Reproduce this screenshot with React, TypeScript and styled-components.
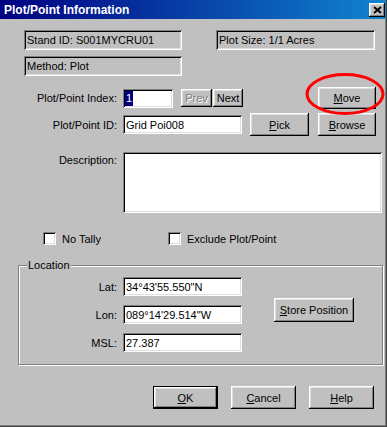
import styled, { createGlobalStyle, css } from "styled-components";

const GlobalStyle = createGlobalStyle`
  html, body {
    margin: 0;
    padding: 0;
    background: #c0c0c0;
  }
  body {
    font-family: "Liberation Sans", Arial, sans-serif;
    font-size: 11px;
    color: #000;
  }
  * {
    box-sizing: border-box;
  }
`;

const raised = css`
  background: #c0c0c0;
  box-shadow: inset -1px -1px #000, inset 1px 1px #fff, inset -2px -2px #808080, inset 2px 2px #dfdfdf;
`;

const sunken = css`
  box-shadow: inset 1px 1px #808080, inset -1px -1px #fff, inset 2px 2px #000, inset -2px -2px #dfdfdf;
`;

const Window = styled.div`
  position: relative;
  width: 387px;
  height: 427px;
  background: #c0c0c0;
  border-right: 1px solid #404040;
  border-bottom: 1px solid #404040;
  box-shadow: inset -1px -1px #808080;
  display: flex;
  flex-direction: column;
`;

const TitleBar = styled.div`
  height: 19px;
  display: flex;
  align-items: center;
  justify-content: space-between;
  padding: 0 1px 0 4px;
  background: linear-gradient(90deg, #000080, #1084d0);
  color: #fff;
  font-weight: bold;
  font-size: 12px;
`;

const CloseButton = styled.div`
  ${raised};
  width: 16px;
  height: 14px;
  display: flex;
  align-items: center;
  justify-content: center;
`;

const InfoRow = styled.div<{ $top: number }>`
  display: flex;
  gap: 34px;
  padding-left: 24px;
  margin-top: ${(p) => p.$top}px;
`;

const StaticBox = styled.div<{ $w: number }>`
  ${sunken};
  width: ${(p) => p.$w}px;
  height: 20px;
  padding-left: 3px;
  display: flex;
  align-items: center;
  white-space: nowrap;
`;

const FormRow = styled.div<{ $top: number; $h: number; $align?: string }>`
  display: flex;
  align-items: ${(p) => p.$align ?? "center"};
  height: ${(p) => p.$h}px;
  margin-top: ${(p) => p.$top}px;
`;

const Label = styled.div<{ $w: number; $pad?: number }>`
  width: ${(p) => p.$w}px;
  margin-right: 6px;
  padding-top: ${(p) => p.$pad ?? 0}px;
  text-align: right;
  white-space: nowrap;
`;

const Field = styled.div<{ $w: number; $h?: number }>`
  ${sunken};
  background: #fff;
  width: ${(p) => p.$w}px;
  height: ${(p) => p.$h ?? 19}px;
  padding: 0 3px;
  display: flex;
  align-items: center;
  white-space: nowrap;
`;

const Selected = styled.span`
  background: #000080;
  color: #fff;
  line-height: 15px;
  padding: 0 1px;
  margin-left: -1px;
`;

const Button = styled.div<{ $w: number; $h: number; $left?: number; $top?: number; $disabled?: boolean }>`
  ${raised};
  width: ${(p) => p.$w}px;
  height: ${(p) => p.$h}px;
  margin-left: ${(p) => p.$left ?? 0}px;
  margin-top: ${(p) => p.$top ?? 0}px;
  display: flex;
  align-items: center;
  justify-content: center;
  white-space: nowrap;
  flex-shrink: 0;
  color: ${(p) => (p.$disabled ? "#808080" : "#000")};
  text-shadow: ${(p) => (p.$disabled ? "1px 1px #fff" : "none")};
`;

const DefaultButton = styled(Button)`
  border: 1px solid #000;
`;

const CheckRow = styled.div`
  display: flex;
  align-items: center;
  height: 13px;
  margin-top: 19px;
  padding-left: 43px;
`;

const CheckItem = styled.div<{ $w?: number }>`
  display: flex;
  align-items: center;
  gap: 6px;
  width: ${(p) => (p.$w ? `${p.$w}px` : "auto")};
`;

const CheckBox = styled.div`
  ${sunken};
  background: #fff;
  width: 13px;
  height: 13px;
`;

const Group = styled.div`
  position: relative;
  margin: 20px 0 0 18px;
  width: 365px;
  height: 100px;
  border: 1px solid #808080;
  box-shadow: inset 1px 1px #fff, 1px 1px #fff;
  display: flex;
  align-items: flex-start;
  padding-top: 11px;
`;

const Legend = styled.div`
  position: absolute;
  top: -7px;
  left: 8px;
  padding: 0 1px;
  line-height: 13px;
  background: #c0c0c0;
`;

const FieldStack = styled.div`
  display: flex;
  flex-direction: column;
  gap: 9px;
`;

const StackRow = styled.div`
  display: flex;
  align-items: center;
`;

const ButtonBar = styled.div`
  display: flex;
  justify-content: flex-end;
  gap: 13px;
  margin-top: 21px;
  padding-right: 12px;
`;

const Annotation = styled.svg`
  position: absolute;
  left: 304px;
  top: 72px;
  pointer-events: none;
`;

const locationFields = [
  { label: "Lat:", value: "34°43'55.550\"N" },
  { label: "Lon:", value: "089°14'29.514\"W" },
  { label: "MSL:", value: "27.387" },
];

export default function App() {
  return (
    <>
      <GlobalStyle />
      <Window>
        <TitleBar>
          Plot/Point Information
          <CloseButton>
            <svg width="9" height="8" viewBox="0 0 9 8">
              <path d="M1 1l7 6M8 1L1 7" stroke="#000" strokeWidth="2" />
            </svg>
          </CloseButton>
        </TitleBar>

        <InfoRow $top={11}>
          <StaticBox $w={158}>Stand ID: S001MYCRU01</StaticBox>
          <StaticBox $w={159}>Plot Size: 1/1 Acres</StaticBox>
        </InfoRow>
        <InfoRow $top={6}>
          <StaticBox $w={158}>Method: Plot</StaticBox>
        </InfoRow>

        <FormRow $top={11} $h={22}>
          <Label $w={117}>Plot/Point Index:</Label>
          <Field $w={50}>
            <Selected>1</Selected>
          </Field>
          <Button $w={31} $h={18} $left={8} $disabled>Prev</Button>
          <Button $w={30} $h={18} $left={1}>Next</Button>
          <Button $w={58} $h={22} $left={75}><u>M</u>ove</Button>
        </FormRow>

        <FormRow $top={4} $h={23}>
          <Label $w={117}>Plot/Point ID:</Label>
          <Field $w={119}>Grid Poi008</Field>
          <Button $w={59} $h={23} $left={8}><u>P</u>ick</Button>
          <Button $w={58} $h={23} $left={9}><u>B</u>rowse</Button>
        </FormRow>

        <FormRow $top={16} $h={61} $align="flex-start">
          <Label $w={117} $pad={2}>Description:</Label>
          <Field $w={259} $h={61} />
        </FormRow>

        <CheckRow>
          <CheckItem $w={125}>
            <CheckBox />
            No Tally
          </CheckItem>
          <CheckItem>
            <CheckBox />
            Exclude Plot/Point
          </CheckItem>
        </CheckRow>

        <Group>
          <Legend>Location</Legend>
          <FieldStack>
            {locationFields.map((f) => (
              <StackRow key={f.label}>
                <Label $w={98}>{f.label}</Label>
                <Field $w={119}>{f.value}</Field>
              </StackRow>
            ))}
          </FieldStack>
          <Button $w={80} $h={24} $left={32} $top={21}><u>S</u>tore Position</Button>
        </Group>

        <ButtonBar>
          <DefaultButton $w={65} $h={23}><u>O</u>K</DefaultButton>
          <Button $w={65} $h={23}><u>C</u>ancel</Button>
          <Button $w={65} $h={23}><u>H</u>elp</Button>
        </ButtonBar>

        <Annotation width="82" height="44" viewBox="0 0 82 44">
          <ellipse cx="41" cy="22" rx="38" ry="19.5" fill="none" stroke="#ff0000" strokeWidth="3" />
        </Annotation>
      </Window>
    </>
  );
}
